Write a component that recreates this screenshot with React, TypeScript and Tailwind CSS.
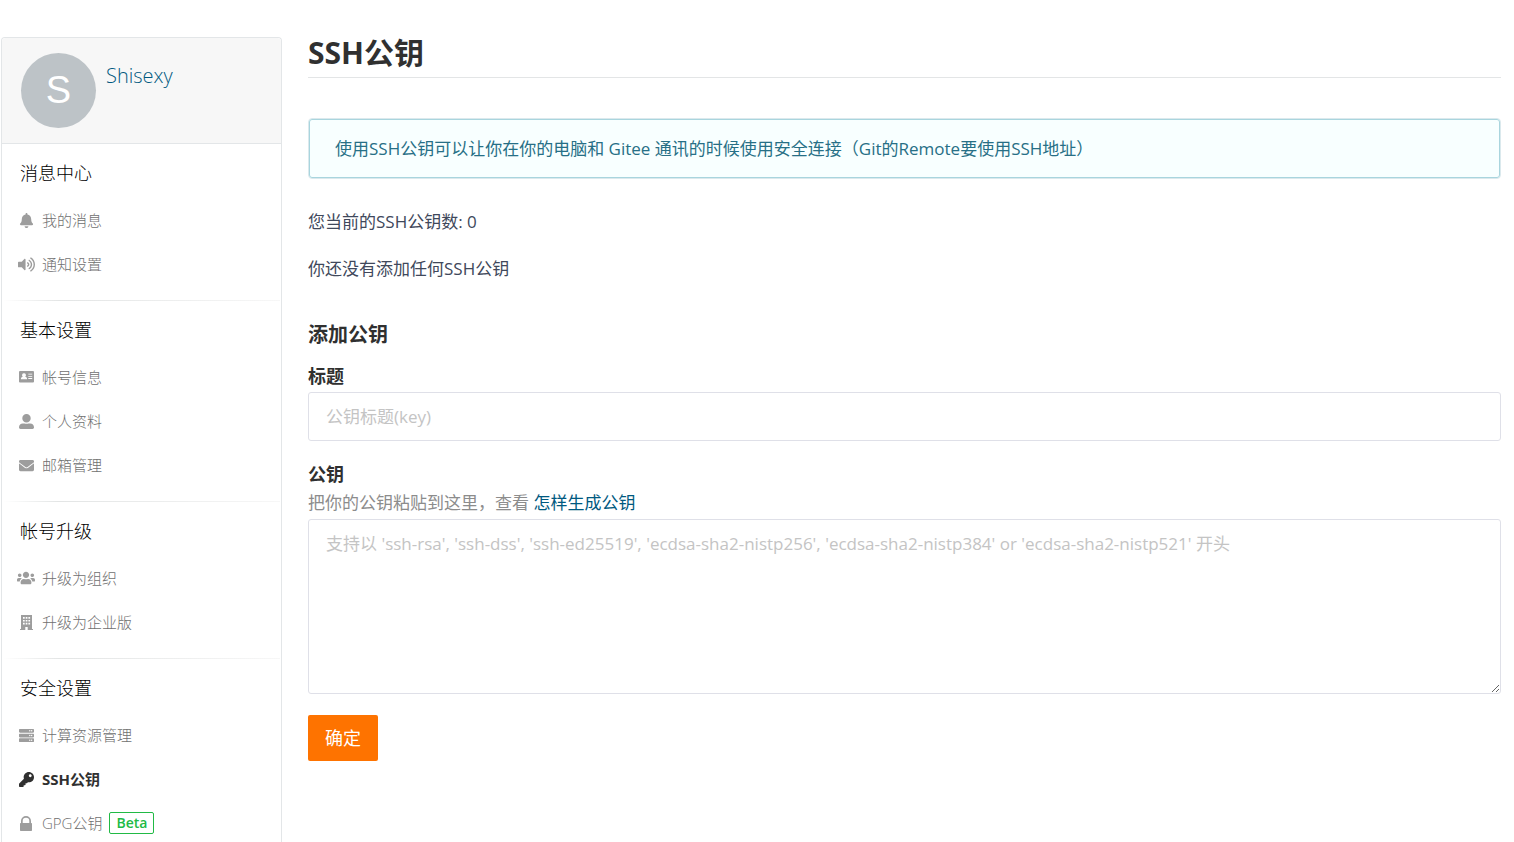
import type { ReactNode } from "react"
import clsx from "clsx"
import { FaBell, FaEnvelope, FaKey, FaServer, FaUserAlt, FaUsers, FaVolumeUp } from "react-icons/fa"

type MenuItem = {
  label: string
  icon: ReactNode
  active?: boolean
  badge?: string
}

type MenuSection = {
  title: string
  items: MenuItem[]
}

function CardIcon() {
  return (
    <svg viewBox="0 0 15 12" width="15" height="12" fill="currentColor">
      <path
        fillRule="evenodd"
        d="M1 0h13a1 1 0 0 1 1 1v9.500a1 1 0 0 1-1 1H1a1 1 0 0 1-1-1V1a1 1 0 0 1 1-1zM5 2.200a1.900 1.900 0 0 0-1.200 3.400C2.600 6 1.900 6.900 1.900 8.300h6.200c0-1.400-.7-2.300-1.900-2.700A1.900 1.900 0 0 0 5 2.200zM9.300 2.700v.9h3.900v-.9zM9.300 4.900v.9h3.900v-.9zM9.300 7.100v.9h3.900v-.9z"
      />
    </svg>
  )
}

function BuildingIcon() {
  return (
    <svg viewBox="0 0 13 15" width="13" height="15" fill="currentColor">
      <path
        fillRule="evenodd"
        d="M1 0h11v14h1v1H7.700v-3H5.300v3H0v-1h1zM3 2v1.700h1.700V2zM5.700 2v1.700h1.700V2zM8.400 2v1.700h1.700V2zM3 4.900v1.700h1.700V4.900zM5.700 4.900v1.700h1.700V4.900zM8.400 4.900v1.700h1.700V4.900zM3 7.800v1.700h1.700V7.800zM5.700 7.800v1.700h1.700V7.800zM8.400 7.800v1.700h1.700V7.800z"
      />
    </svg>
  )
}

function LockIcon() {
  return (
    <svg viewBox="0 0 12 15" width="12" height="15" fill="currentColor">
      <path
        fillRule="evenodd"
        d="M1 7V5a5 5 0 0 1 10 0v2h.3a.7.7 0 0 1 .7.7v6.600a.7.7 0 0 1-.7.7H.7a.7.7 0 0 1-.7-.7V7.700A.7.7 0 0 1 .7 7zM2.700 7h6.600V5a3.300 3.300 0 0 0-6.600 0z"
      />
    </svg>
  )
}

const sections: MenuSection[] = [
  {
    title: "消息中心",
    items: [
      { label: "我的消息", icon: <FaBell size={15} /> },
      { label: "通知设置", icon: <FaVolumeUp size={17} /> },
    ],
  },
  {
    title: "基本设置",
    items: [
      { label: "帐号信息", icon: <CardIcon /> },
      { label: "个人资料", icon: <FaUserAlt size={15} /> },
      { label: "邮箱管理", icon: <FaEnvelope size={15} /> },
    ],
  },
  {
    title: "帐号升级",
    items: [
      { label: "升级为组织", icon: <FaUsers size={18} /> },
      { label: "升级为企业版", icon: <BuildingIcon /> },
    ],
  },
  {
    title: "安全设置",
    items: [
      { label: "计算资源管理", icon: <FaServer size={15} /> },
      { label: "SSH公钥", icon: <FaKey size={15} />, active: true },
      { label: "GPG公钥", icon: <LockIcon />, badge: "Beta" },
    ],
  },
]

function Sidebar() {
  return (
    <aside className="w-[281px] shrink-0 rounded-t border border-b-0 border-[#e3e6e8]">
      <div className="flex gap-2.5 rounded-t border-b border-[#e3e6e8] bg-[#f7f7f7] px-[19px] py-[15px]">
        <div className="flex size-[75px] items-center justify-center rounded-full bg-[#bdc3c7] font-['Liberation_Sans'] text-[38px] text-white">
          S
        </div>
        <a href="#profile" className="mt-2 self-start text-xl leading-[30px] font-light text-[#005980]">
          Shisexy
        </a>
      </div>
      <nav>
        {sections.map((section, index) => (
          <div key={section.title}>
            {index > 0 && <div className="mx-px h-px bg-linear-to-r from-white via-[#e3e5e5] via-20% to-[#f7f7f7]" />}
            <div className="pb-3.5">
              <h2 className="h-[54px] px-[18px] pt-[15px] text-lg leading-7 font-light text-black">{section.title}</h2>
              <ul>
                {section.items.map((item) => (
                  <li key={item.label}>
                    <a
                      href="#menu"
                      className={clsx(
                        "flex h-11 items-center px-[15px] text-[15px]",
                        item.active ? "font-bold text-[#303030]" : "font-light text-[#707070]"
                      )}
                    >
                      <span className={clsx("mr-[7px] flex w-[18px] justify-center", !item.active && "text-[#9d9d9d]")}>
                        {item.icon}
                      </span>
                      {item.label}
                      {item.badge && (
                        <span className="ml-[7px] rounded-xs border border-[#21ba45] px-1.5 text-sm leading-5 font-semibold text-[#21ba45]">
                          {item.badge}
                        </span>
                      )}
                    </a>
                  </li>
                ))}
              </ul>
            </div>
          </div>
        ))}
      </nav>
    </aside>
  )
}

export default function App() {
  return (
    <div className="flex h-screen gap-[26px] overflow-hidden bg-white pt-[37px] pr-[13px] pl-px font-['Open_Sans','Noto_Sans_CJK_SC',sans-serif]">
      <Sidebar />
      <main className="min-w-0 flex-1 text-[17px] text-[#40485b]">
        <h1 className="border-b border-[#e3e5e6] pb-2 text-[30px] leading-8 font-bold text-[#303030]">SSH公钥</h1>

        <div className="mt-10 rounded border border-[#dbe9ed] bg-[#f8ffff] text-[#276f86]">
          <p className="rounded-[3px] border border-[#a9d5de] px-[25px] py-3.5 leading-[29px]">
            使用SSH公钥可以让你在你的电脑和 Gitee 通讯的时候使用安全连接（Git的Remote要使用SSH地址）
          </p>
        </div>

        <p className="mt-[29px] leading-7">您当前的SSH公钥数: 0</p>
        <p className="mt-[19px] leading-7">你还没有添加任何SSH公钥</p>

        <h3 className="mt-[38px] text-xl leading-7 font-bold text-[#303030]">添加公钥</h3>
        <form onSubmit={(e) => e.preventDefault()}>
          <label htmlFor="key-title" className="mt-[15px] block text-lg leading-6 font-bold text-[#303030]">
            标题
          </label>
          <input
            id="key-title"
            type="text"
            placeholder="公钥标题(key)"
            className="mt-1 block h-[49px] w-full rounded-[3px] border border-[#dfe0e8] px-[17px] outline-none placeholder:text-[#c4c4c4]"
          />

          <label htmlFor="key-body" className="mt-[21px] block text-lg leading-6 font-bold text-[#303030]">
            公钥
          </label>
          <p className="mt-[3px] mb-0.5 leading-7 text-[#8c8c8c]">
            把你的公钥粘贴到这里，查看{" "}
            <a href="#help" className="text-[#005980]">
              怎样生成公钥
            </a>
          </p>
          <textarea
            id="key-body"
            placeholder="支持以 'ssh-rsa', 'ssh-dss', 'ssh-ed25519', 'ecdsa-sha2-nistp256', 'ecdsa-sha2-nistp384' or 'ecdsa-sha2-nistp521' 开头"
            className="block h-[175px] w-full resize-y rounded-[3px] border border-[#dfe0e8] px-[17px] py-3 leading-6 outline-none placeholder:text-[#c4c4c4]"
          />

          <button type="submit" className="mt-[21px] h-[46px] rounded-xs bg-[#fe7300] px-[17px] text-lg text-white">
            确定
          </button>
        </form>
      </main>
    </div>
  )
}
